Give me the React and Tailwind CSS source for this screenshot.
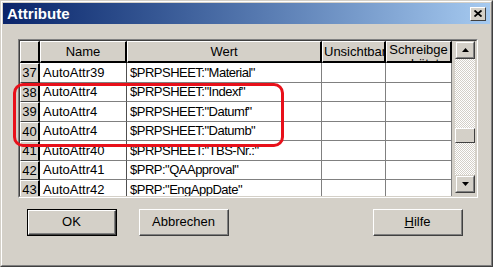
import React from "react";

const rows = [
  { n: "37", name: "AutoAttr39", wert: '$PRPSHEET:"Material"', h: "h-[20px]" },
  { n: "38", name: "AutoAttr4", wert: '$PRPSHEET:"Indexf"', h: "h-[19px]" },
  { n: "39", name: "AutoAttr4", wert: '$PRPSHEET:"Datumf"', h: "h-[20px]" },
  { n: "40", name: "AutoAttr4", wert: '$PRPSHEET:"Datumb"', h: "h-[19px]" },
  { n: "41", name: "AutoAttr40", wert: '$PRPSHEET:"TBS-Nr.:"', h: "h-[20px]" },
  { n: "42", name: "AutoAttr41", wert: '$PRP:"QAApproval"', h: "h-[19px]" },
  { n: "43", name: "AutoAttr42", wert: '$PRP:"EngAppDate"', h: "h-[20px]" },
];

function Btn({ children, def }) {
  const inner = (
    <div className="w-full h-full border-t border-l border-t-white border-l-white border-b border-r border-b-[#404040] border-r-[#404040]">
      <div className="w-full h-full border-b border-r border-b-[#808080] border-r-[#808080] flex items-center justify-center text-[13px] text-black">
        {children}
      </div>
    </div>
  );
  return def ? (
    <div className="w-[90px] h-[27px] border border-black">{inner}</div>
  ) : (
    <div className="w-[90px] h-[27px]">{inner}</div>
  );
}

function ScrollBtn({ up }) {
  return (
    <div className="h-[18px] w-full bg-[#d4d0c8] border-t border-l border-t-[#d4d0c8] border-l-[#d4d0c8] border-b border-r border-b-[#404040] border-r-[#404040]">
      <div className="w-full h-full border-t border-l border-t-white border-l-white border-b border-r border-b-[#808080] border-r-[#808080] flex items-center justify-center">
        <svg width="7" height="4" viewBox="0 0 7 4">
          {up ? <polygon points="3.5,0 7,4 0,4" fill="#000" /> : <polygon points="0,0 7,0 3.5,4" fill="#000" />}
        </svg>
      </div>
    </div>
  );
}

export default function App() {
  return (
    <div
      className="relative w-[493px] h-[267px] bg-[#d4d0c8] overflow-hidden"
      style={{ fontFamily: '"Liberation Sans", Arial, sans-serif' }}
    >
      <div className="w-full h-full border-t border-l border-t-[#d4d0c8] border-l-[#d4d0c8] border-b border-r border-b-[#404040] border-r-[#404040]">
        <div className="w-full h-full border-t border-l border-t-white border-l-white border-b border-r border-b-[#808080] border-r-[#808080] p-[1px] flex flex-col">
          {/* title bar */}
          <div className="h-[21px] flex items-center justify-between pl-[4px] pr-[4px] bg-gradient-to-r from-[#0a246a] to-[#a6caf0]">
            <span className="text-white font-bold text-[15px] leading-none">Attribute</span>
            <div className="w-[16px] h-[14px] bg-[#d4d0c8] border-t border-l border-t-white border-l-white border-b border-r border-b-[#404040] border-r-[#404040] flex items-center justify-center">
              <svg width="8" height="7" viewBox="0 0 8 7">
                <path d="M0.5 0.5 L7.5 6.5 M7.5 0.5 L0.5 6.5" stroke="#000" strokeWidth="1.8" />
              </svg>
            </div>
          </div>

          {/* content */}
          <div className="flex-1 pl-[15px] pt-[15px] flex flex-col">
            {/* grid */}
            <div className="w-[460px] h-[159px] border-t border-l border-t-[#808080] border-l-[#808080] border-b border-r border-b-white border-r-white">
              <div className="w-full h-full border-t border-l border-t-[#404040] border-l-[#404040] border-b border-r border-b-[#d4d0c8] border-r-[#d4d0c8] flex gap-[3px] pr-[1px]">
                <div className="w-[432px] h-full overflow-hidden flex flex-col">
                  {/* header */}
                  <div className="flex h-[22px] shrink-0 text-[13px] text-black">
                    <div className="w-[20px] h-full bg-[#d4d0c8] border-t border-l border-t-white border-l-white border-b-2 border-r-2 border-b-black border-r-black" />
                    <div className="w-[87px] h-full bg-[#d4d0c8] border-t border-l border-t-white border-l-white border-b-2 border-r-2 border-b-black border-r-black flex items-center justify-center">
                      Name
                    </div>
                    <div className="w-[195px] h-full bg-[#d4d0c8] border-t border-l border-t-white border-l-white border-b-2 border-r-2 border-b-black border-r-black flex items-center justify-center">
                      Wert
                    </div>
                    <div className="w-[64px] h-full bg-[#d4d0c8] border-t border-l border-t-white border-l-white border-b-2 border-r-2 border-b-black border-r-black flex items-center pl-[1px] overflow-hidden whitespace-nowrap">
                      Unsichtbar
                    </div>
                    <div className="w-[66px] h-full bg-[#d4d0c8] border-t border-l border-t-white border-l-white border-b-2 border-r-2 border-b-black border-r-black overflow-hidden text-center leading-[14px] pt-[1px]">
                      <div>Schreibge</div>
                      <div>schützt</div>
                    </div>
                  </div>
                  {rows.map((r) => (
                    <div key={r.n} className={`flex shrink-0 text-[13px] text-black ${r.h}`}>
                      <div className="w-[20px] h-full bg-[#d4d0c8] border-t border-l border-t-white border-l-white border-b border-b-[#404040] border-r-2 border-r-black flex items-center justify-center">
                        {r.n}
                      </div>
                      <div className="w-[87px] h-full bg-white border-b border-r border-b-[#808080] border-r-[#505050] flex items-center pl-[3px] whitespace-nowrap">
                        {r.name}
                      </div>
                      <div className="w-[195px] h-full bg-white border-b border-r border-b-[#808080] border-r-[#808080] flex items-center pl-[3px] whitespace-nowrap overflow-hidden tracking-[-0.5px]">
                        {r.wert}
                      </div>
                      <div className="w-[64px] h-full bg-white border-b border-r border-b-[#808080] border-r-[#808080]" />
                      <div className="w-[66px] h-full bg-white border-b border-r border-b-[#808080] border-r-[#808080]" />
                    </div>
                  ))}
                </div>
                {/* scrollbar */}
                <div className="w-[20px] h-full flex flex-col pb-[3px]">
                  <ScrollBtn up />
                  <div className="flex-1 flex flex-col bg-[repeating-conic-gradient(#ffffff_0_25%,#d4d0c8_0_50%)] bg-[length:2px_2px]">
                    <div className="h-[69px]" />
                    <div className="h-[15px] bg-[#d4d0c8] border-t border-l border-t-white border-l-white border-b border-r border-b-[#404040] border-r-[#404040]" />
                  </div>
                  <ScrollBtn />
                </div>
              </div>
            </div>

            {/* buttons */}
            <div className="flex mt-[11px] pl-[9px]">
              <Btn def>OK</Btn>
              <div className="ml-[22px]">
                <Btn>Abbrechen</Btn>
              </div>
              <div className="ml-[144px]">
                <Btn>
                  <span>
                    <span className="underline">H</span>ilfe
                  </span>
                </Btn>
              </div>
            </div>
          </div>
        </div>
      </div>

      {/* red annotation */}
      <div className="absolute left-[13px] top-[83px] w-[271px] h-[64px] border-[3px] border-[#e8101a] rounded-[10px] pointer-events-none" />
    </div>
  );
}
